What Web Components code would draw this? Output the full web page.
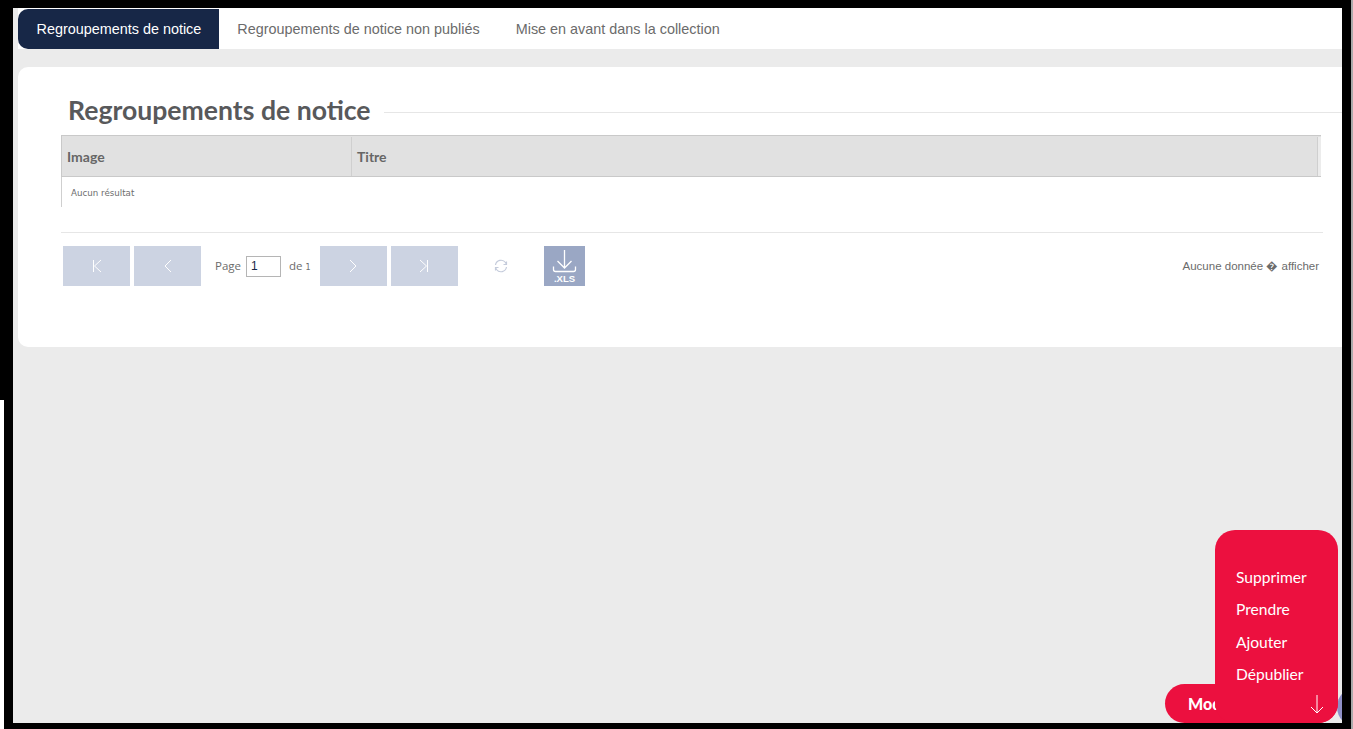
<!DOCTYPE html>
<html lang="fr">
<head>
<meta charset="utf-8">
<title>Regroupements de notice</title>
<style>
    html, body{
        margin: 0;
        height: 100%;
        overflow: hidden;
        background: #000;
    }
</style>
</head>
<body>
<notice-app>
    <tab-bar slot="tabs">
        <tab-item active>Regroupements de notice</tab-item>
        <tab-item>Regroupements de notice non publiés</tab-item>
        <tab-item>Mise en avant dans la collection</tab-item>
    </tab-bar>
    <notice-card title="Regroupements de notice">
        <notice-table></notice-table>
        <notice-pager></notice-pager>
    </notice-card>
    <action-menu slot="actions"></action-menu>
</notice-app>

<script>
class NoticeApp extends HTMLElement{
    constructor(){
        super()
        this.attachShadow({mode: 'open'})
        this.shadowRoot.innerHTML = `
            <style>
                :host{
                    display: block;
                    box-sizing: border-box;
                    width: 1353px;
                    height: 729px;
                    padding: 8px 11px 6px 13px;
                    background:
                        linear-gradient(#aaa, #aaa) right / 2px 100% no-repeat,
                        linear-gradient(#fff, #fff) left bottom / 4px 329px no-repeat,
                        #000;
                }
                #screen{
                    position: relative;
                    height: 100%;
                    overflow: hidden;
                    background: #ebebeb;
                    display: flex;
                    flex-direction: column;
                }
                #content{
                    padding: 18px 0 0 5px;
                }
            </style>
            <div id="screen">
                <slot name="tabs"></slot>
                <div id="content"><slot></slot></div>
                <slot name="actions"></slot>
            </div>
        `
    }
}

class TabBar extends HTMLElement{
    constructor(){
        super()
        this.attachShadow({mode: 'open'})
        this.shadowRoot.innerHTML = `
            <style>
                :host{
                    display: flex;
                    box-sizing: border-box;
                    height: 41px;
                    margin-left: 5px;
                    padding-top: 1px;
                    background: #fff;
                }
            </style>
            <slot></slot>
        `
    }
}

class TabItem extends HTMLElement{
    constructor(){
        super()
        this.attachShadow({mode: 'open'})
        this.shadowRoot.innerHTML = `
            <style>
                :host{
                    display: flex;
                    align-items: center;
                    padding: 0 17.5px 0 18.5px;
                    font: 14.4px "Liberation Sans", Arial, sans-serif;
                    color: #6b6b6b;
                    white-space: nowrap;
                }
                :host([active]){
                    background: #172747;
                    color: #fff;
                    border-radius: 10px 0 0 10px;
                }
            </style>
            <slot></slot>
        `
    }
}

class NoticeCard extends HTMLElement{
    constructor(){
        super()
        this.attachShadow({mode: 'open'})
        this.shadowRoot.innerHTML = `
            <style>
                :host{
                    display: block;
                    box-sizing: border-box;
                    height: 280px;
                    background: #fff;
                    border-radius: 10px 0 0 10px;
                    padding: 22px 0 0 43px;
                }
                header{
                    display: flex;
                    align-items: center;
                    height: 46px;
                    padding-left: 7px;
                }
                h2{
                    margin: 0 0 4px;
                    font: 700 26.6px Lato, sans-serif;
                    color: #58595b;
                    white-space: nowrap;
                }
                header i{
                    flex: 1;
                    height: 1px;
                    margin-left: 13px;
                    background: #e6e6e6;
                }
                main{
                    margin-right: 19px;
                }
            </style>
            <header><h2></h2><i></i></header>
            <main><slot></slot></main>
        `
        this.shadowRoot.querySelector('h2').textContent = this.getAttribute('title')
    }
}

class NoticeTable extends HTMLElement{
    constructor(){
        super()
        this.attachShadow({mode: 'open'})
        this.shadowRoot.innerHTML = `
            <style>
                :host{
                    display: block;
                    margin-right: 2px;
                }
                #head{
                    display: grid;
                    grid-template-columns: 290px 1fr 3px;
                    height: 42px;
                    box-sizing: border-box;
                    padding-top: 1px;
                    background: #e1e1e1;
                    border: 1px solid #c9c9c9;
                    border-right: 0;
                    font: 700 14px Lato, sans-serif;
                    color: #666;
                }
                #head div{
                    display: flex;
                    align-items: center;
                    padding-left: 5px;
                    border-right: 1px solid #cfcfcf;
                }
                #head div:last-child{
                    padding: 0;
                    border: 0;
                    background: #ececec;
                }
                #empty{
                    height: 30px;
                    box-sizing: border-box;
                    padding: 11px 0 0 9px;
                    border-left: 1px solid #cfcfcf;
                    font: 8.7px "DejaVu Sans", sans-serif;
                    color: #6d6d6d;
                }
            </style>
            <div id="head"><div>Image</div><div>Titre</div><div></div></div>
            <div id="empty">Aucun résultat</div>
        `
    }
}

class PagerButton extends HTMLElement{
    constructor(){
        super()
        this.attachShadow({mode: 'open'})
        this.shadowRoot.innerHTML = `
            <style>
                :host{
                    display: flex;
                    align-items: center;
                    justify-content: center;
                    width: 67px;
                    height: 40px;
                    background: #ccd3e2;
                }
                svg{
                    width: 14px;
                    height: 14px;
                    fill: none;
                    stroke: #fff;
                    stroke-width: 1;
                }
            </style>
            <svg viewBox="0 0 14 14"><path d="${this.getAttribute('d')}"/></svg>
        `
    }
}

class NoticePager extends HTMLElement{
    constructor(){
        super()
        this.attachShadow({mode: 'open'})
        this.shadowRoot.innerHTML = `
            <style>
                :host{
                    display: flex;
                    align-items: center;
                    height: 40px;
                    margin: 25px 0 0 0;
                    padding: 13px 4px 0 2px;
                    border-top: 1px solid #e6e6e6;
                    font: 11.5px "Open Sans", sans-serif;
                    color: #6b6b6b;
                }
                .gap{
                    margin-left: 4px;
                }
                #page{
                    display: flex;
                    align-items: center;
                    margin: 0 9px 0 14px;
                    height: 38px;
                    padding-bottom: 2px;
                }
                #page small{
                    font: 8px "DejaVu Sans", sans-serif;
                    margin: 4px 0 0 3px;
                }
                input{
                    box-sizing: border-box;
                    width: 35px;
                    height: 21px;
                    margin: 2px 8px 0 5px;
                    padding: 0 4px;
                    border: 1px solid #b5b5b5;
                    font: 12px "Liberation Sans", sans-serif;
                    color: #172747;
                    background: #fff;
                }
                #refresh{
                    width: 14px;
                    height: 14px;
                    margin-left: 36px;
                    fill: none;
                    stroke: #c4cbdb;
                    stroke-width: 1.2;
                }
                #xls{
                    display: flex;
                    width: 41px;
                    height: 40px;
                    margin-left: 36px;
                    background: #9aa7c4;
                }
                #xls svg{
                    width: 41px;
                    height: 40px;
                }
                #xls text{
                    font: 700 9.5px "Liberation Sans", sans-serif;
                    fill: #fff;
                }
                #info{
                    margin: 0 0 2px auto;
                    font: 11.5px "Liberation Sans", sans-serif;
                }
            </style>
            <pager-button d="M3.5 1v12M11 1L4.5 7l6.5 6"></pager-button>
            <pager-button class="gap" d="M10 1L4 7l6 6"></pager-button>
            <div id="page">Page <input value="1"> de<small>1</small></div>
            <pager-button d="M4 1l6 6-6 6"></pager-button>
            <pager-button class="gap" d="M3 1l6.5 6-6.5 6M10.5 1v12"></pager-button>
            <svg id="refresh" viewBox="0 0 14 14"><path d="M1.5 6A5.6 5.6 0 0 1 11.5 3.5L12.5 5.5M12.5 2.5V5.5H9.5M12.5 8A5.6 5.6 0 0 1 2.5 10.5L1.5 8.5M1.5 11.5V8.5H4.5"/></svg>
            <div id="xls">
                <svg viewBox="0 0 41 40" fill="none" stroke="#fff" stroke-width="1.3">
                    <path d="M20.5 4v18M13.5 15l7 7 7-7M9.5 20.5v3q0 2 2 2h18q2 0 2-2v-3"/>
                    <text x="20.5" y="36" text-anchor="middle" stroke="none">.XLS</text>
                </svg>
            </div>
            <div id="info">Aucune donnée � afficher</div>
        `
    }
}

class ActionMenu extends HTMLElement{
    constructor(){
        super()
        this.attachShadow({mode: 'open'})
        this.shadowRoot.innerHTML = `
            <style>
                :host{
                    position: absolute;
                    right: 4px;
                    bottom: 0;
                    width: 173px;
                    height: 193px;
                    font: 15.6px Lato, sans-serif;
                    color: #fff;
                }
                #dot{
                    position: absolute;
                    right: -39px;
                    bottom: -4px;
                    width: 40px;
                    height: 40px;
                    background: #8f90c8;
                    border-radius: 50%;
                }
                #toggle{
                    position: absolute;
                    left: 0;
                    bottom: 0;
                    width: 100%;
                    height: 39px;
                    box-sizing: border-box;
                    padding: 10px 0 0 23px;
                    background: #ec103f;
                    border-radius: 20px;
                    font-weight: 900;
                    font-size: 16px;
                }
                #list{
                    position: absolute;
                    top: 0;
                    right: 0;
                    bottom: 0;
                    width: 123px;
                    box-sizing: border-box;
                    margin: 0;
                    padding: 31px 0 0 21px;
                    list-style: none;
                    background: #ec103f;
                    border-radius: 20px;
                }
                li{
                    height: 32.4px;
                    line-height: 32px;
                }
                svg{
                    position: absolute;
                    right: 14px;
                    bottom: 9px;
                    width: 14px;
                    height: 20px;
                    fill: none;
                    stroke: #fff;
                    stroke-width: 1;
                }
            </style>
            <div id="dot"></div>
            <div id="toggle">Modifier</div>
            <ul id="list">
                <li>Supprimer</li>
                <li>Prendre</li>
                <li>Ajouter</li>
                <li>Dépublier</li>
            </ul>
            <svg viewBox="0 0 14 20"><path d="M7 1v18M1 13l6 6 6-6"/></svg>
        `
    }
}

customElements.define('notice-app', NoticeApp)
customElements.define('tab-bar', TabBar)
customElements.define('tab-item', TabItem)
customElements.define('notice-card', NoticeCard)
customElements.define('notice-table', NoticeTable)
customElements.define('pager-button', PagerButton)
customElements.define('notice-pager', NoticePager)
customElements.define('action-menu', ActionMenu)
</script>
</body>
</html>
